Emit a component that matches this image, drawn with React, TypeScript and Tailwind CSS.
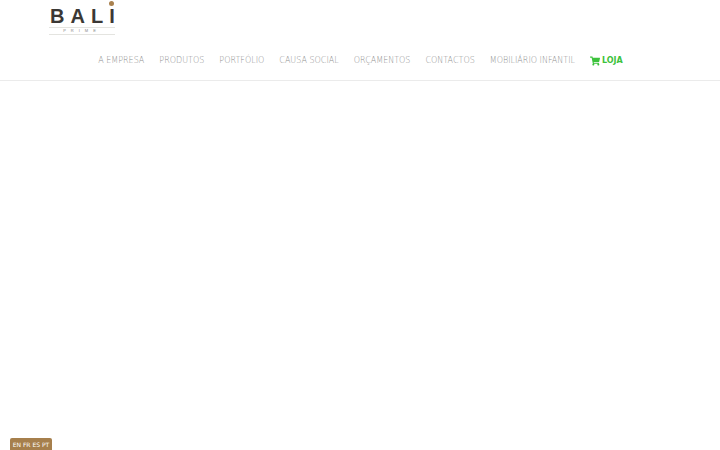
import { FaShoppingCart } from 'react-icons/fa';

const links = ['A EMPRESA', 'PRODUTOS', 'PORTFÓLIO', 'CAUSA SOCIAL', 'ORÇAMENTOS', 'CONTACTOS', 'MOBILIÁRIO INFANTIL'];

const Logo = () => (
  <div className="relative w-[66px] h-[36px] ml-[49px]">
    <div className="flex gap-[6px] pt-[6px] pl-[1px] text-[20px] leading-[20px] font-bold text-[#3b3835] font-['Liberation_Sans',sans-serif]">
      <span>B</span>
      <span>A</span>
      <span>L</span>
      <span>I</span>
    </div>
    <div className="absolute right-[1px] top-[1px] w-[5px] h-[5px] rounded-full bg-[#a9814f]" />
    <div className="absolute left-0 right-0 top-[27px] border-t border-[#e4e4e0]" />
    <div className="absolute left-0 right-0 top-[28px] text-center text-[4px] leading-[6px] tracking-[5px] text-[#888] font-['Liberation_Sans',sans-serif]">
      PRIME
    </div>
    <div className="absolute left-0 right-0 top-[34px] border-t border-[#e4e4e0]" />
  </div>
);

export default function App() {
  return (
    <div className="relative h-[450px] w-[720px] overflow-hidden bg-white font-['DejaVu_Sans',sans-serif]">
      {/* Header */}
      <header className="h-[81px] border-b border-[#ebebeb]">
        <Logo />
        <nav className="flex justify-center items-center gap-[15px] mt-[16px] pt-[1px] pl-[1px] text-[8px] leading-[16px] font-extralight">
          {links.map((link) => (
            <a key={link} className="text-[#8f8f8f]">
              {link}
            </a>
          ))}
          <a className="flex items-center gap-[2px] font-bold text-[#3cc23c]">
            <FaShoppingCart size={10} />
            <span>LOJA</span>
          </a>
        </nav>
      </header>

      {/* Language switcher */}
      <div className="absolute left-[10px] bottom-0 h-[12px] w-[42px] bg-[#a67f4c] rounded-t-[2px] text-center text-[6px] leading-[13px] whitespace-nowrap text-white">
        EN FR ES PT
      </div>
    </div>
  );
}
